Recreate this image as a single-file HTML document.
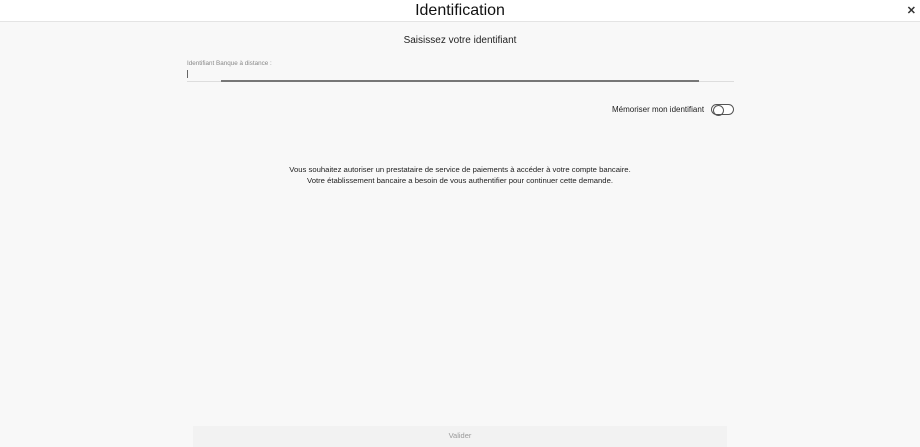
<!DOCTYPE html>
<html><head><meta charset="utf-8"><style>
*{margin:0;padding:0;box-sizing:border-box}
body{width:920px;height:447px;background:#f8f8f8;font-family:"Liberation Sans",sans-serif;position:relative;overflow:hidden;color:#222}
.hdr{position:absolute;left:0;top:0;width:920px;height:22px;background:#fff;border-bottom:1px solid #e4e4e4}
.hdr h1{position:absolute;left:0;right:0;top:2px;text-align:center;font-weight:normal;font-size:16px;color:#111}
.x{position:absolute;right:4px;top:4px;font-size:11px;color:#333;font-weight:bold}
.t2{position:absolute;left:0;right:0;top:35px;text-align:center;font-size:10px;color:#222}
.lbl{position:absolute;left:187px;top:60px;font-size:6.3px;color:#888}
.cur{position:absolute;left:187px;top:70px;width:1px;height:8px;background:#666}
.line{position:absolute;left:187px;top:81px;width:547px;height:1px;background:#ddd}
.bar{position:absolute;left:221px;top:80px;width:478px;height:2px;background:#777}
.mem{position:absolute;left:612px;top:105px;font-size:8px;color:#222}
.tog{position:absolute;left:711px;top:104px;width:23px;height:11px;border:1px solid #555;border-radius:6px;background:#fff}
.tog:after{content:"";position:absolute;left:1px;top:0px;width:9px;height:9px;border:1px solid #555;border-radius:50%}
.msg{position:absolute;left:0;right:0;top:164px;text-align:center;font-size:7.7px;line-height:11px;color:#222}
.btn{position:absolute;left:193px;top:426px;width:534px;height:21px;background:#f2f2f2;text-align:center;font-size:7.5px;line-height:19px;color:#999}
</style></head><body>
<div class="hdr"><h1>Identification</h1><span class="x">✕</span></div>
<div class="t2">Saisissez votre identifiant</div>
<div class="lbl">Identifiant Banque à distance :</div>
<div class="cur"></div>
<div class="line"></div><div class="bar"></div>
<div class="mem">Mémoriser mon identifiant</div>
<div class="tog"></div>
<div class="msg">Vous souhaitez autoriser un prestataire de service de paiements à accéder à votre compte bancaire.<br>Votre établissement bancaire a besoin de vous authentifier pour continuer cette demande.</div>
<div class="btn">Valider</div>
</body></html>
